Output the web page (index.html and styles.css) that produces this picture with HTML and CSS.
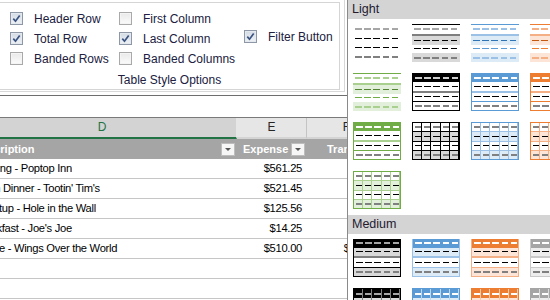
FILE: index.html
```html
<!DOCTYPE html>
<html lang="en">
<head>
  <meta charset="UTF-8" />
  <title>Table Styles</title>
  <link rel="stylesheet" href="styles.css">
</head>
<body>

  <div class="main">
    <div class="ribbon">
      <div class="group">
        <div class="opts">
          <div class="optcol">
            <div class="opt"><span class="cb on"><svg viewBox="0 0 11 11"><path d="M2.3 5.6 L4.5 8.2 L8.7 2.4"/></svg></span>Header Row</div>
            <div class="opt"><span class="cb on"><svg viewBox="0 0 11 11"><path d="M2.3 5.6 L4.5 8.2 L8.7 2.4"/></svg></span>Total Row</div>
            <div class="opt"><span class="cb"></span>Banded Rows</div>
          </div>
          <div class="optcol">
            <div class="opt"><span class="cb"></span>First Column</div>
            <div class="opt"><span class="cb on"><svg viewBox="0 0 11 11"><path d="M2.3 5.6 L4.5 8.2 L8.7 2.4"/></svg></span>Last Column</div>
            <div class="opt"><span class="cb"></span>Banded Columns</div>
          </div>
          <div class="optcol filter">
            <div class="opt"><span class="cb on"><svg viewBox="0 0 11 11"><path d="M2.3 5.6 L4.5 8.2 L8.7 2.4"/></svg></span>Filter Button</div>
          </div>
        </div>
        <div class="gname">Table Style Options</div>
      </div>
    </div>

    <div class="formula"></div>

    <div class="sheet">
      <div class="sgrid">
        <div class="ch sel">D</div>
        <div class="ch">E</div>
        <div class="ch">F</div>

        <div class="th">Description<span class="dd"></span></div>
        <div class="th">Expense<span class="dd"></span></div>
        <div class="th f">Transport</div>

        <div class="td">Lodging - Poptop Inn</div>
        <div class="td num">$561.25</div>
        <div class="td"></div>

        <div class="td">Team Dinner - Tootin' Tim's</div>
        <div class="td num">$521.45</div>
        <div class="td"></div>

        <div class="td">IT Setup - Hole in the Wall</div>
        <div class="td num">$125.56</div>
        <div class="td"></div>

        <div class="td">Breakfast - Joe's Joe</div>
        <div class="td num">$14.25</div>
        <div class="td"></div>

        <div class="td">Airfare - Wings Over the World</div>
        <div class="td num">$510.00</div>
        <div class="td num">$320.00</div>

        <div class="td"></div><div class="td"></div><div class="td"></div>
        <div class="td"></div><div class="td"></div><div class="td"></div>
        <div class="td"></div><div class="td"></div><div class="td"></div>
      </div>
    </div>
  </div>

  <div class="gallery">
    <div class="ghead">Light</div>
    <div class="tiles">
      <div class="thumb s-plain k"><i></i><i></i><i></i><i></i></div>
      <div class="thumb s-band k"><i></i><i></i><i></i><i></i></div>
      <div class="thumb s-band b"><i></i><i></i><i></i><i></i></div>
      <div class="thumb s-band o"><i></i><i></i><i></i><i></i></div>

      <div class="thumb s-band g"><i></i><i></i><i></i><i></i></div>
      <div class="thumb s-head k"><i></i><i></i><i></i><i></i></div>
      <div class="thumb s-head b"><i></i><i></i><i></i><i></i></div>
      <div class="thumb s-head o"><i></i><i></i><i></i><i></i></div>

      <div class="thumb s-head g"><i></i><i></i><i></i><i></i></div>
      <div class="thumb s-grid k"><i></i><i></i><i></i><i></i></div>
      <div class="thumb s-grid b"><i></i><i></i><i></i><i></i></div>
      <div class="thumb s-grid o"><i></i><i></i><i></i><i></i></div>

      <div class="thumb s-grid g"><i></i><i></i><i></i><i></i></div>
    </div>

    <div class="ghead">Medium</div>
    <div class="tiles">
      <div class="thumb s-med k"><i></i><i></i><i></i><i></i></div>
      <div class="thumb s-med b"><i></i><i></i><i></i><i></i></div>
      <div class="thumb s-med o"><i></i><i></i><i></i><i></i></div>
      <div class="thumb s-med y"><i></i><i></i><i></i><i></i></div>

      <div class="thumb s-mg k"><i></i><i></i><i></i><i></i></div>
      <div class="thumb s-mg b"><i></i><i></i><i></i><i></i></div>
      <div class="thumb s-mg o"><i></i><i></i><i></i><i></i></div>
      <div class="thumb s-mg y"><i></i><i></i><i></i><i></i></div>
    </div>
  </div>

</body>
</html>
```

FILE: styles.css
```css
body {
  margin: 0;
  width: 550px;
  height: 300px;
  overflow: hidden;
  display: flex;
  background: #fff;
  font-family: "Liberation Sans", Arial, sans-serif;
  color: #202040;
}

/* left side: ribbon + sheet */

.main {
  width: 347px;
  flex: none;
  display: flex;
  flex-direction: column;
  overflow: hidden;
}

.ribbon {
  width: 344px;
  height: 91px;
  border-right: 1px solid #d8d8d8;
  border-bottom: 1px solid #d8d8d8;
}

.group {
  box-sizing: border-box;
  width: 340px;
  height: 88px;
  margin-top: 2px;
  padding: 9px 0 0 10px;
  border: 1px solid #d5d5d5;
  border-left: none;
}

.opts {
  display: grid;
  grid-template-columns: 109px 125px auto;
}

.optcol {
  display: flex;
  flex-direction: column;
  gap: 7px;
}

.optcol.filter {
  padding-top: 18px;
}

.opt {
  display: flex;
  align-items: center;
  gap: 11px;
  height: 13px;
  font-size: 12px;
  white-space: nowrap;
}

.cb {
  box-sizing: border-box;
  width: 13px;
  height: 13px;
  flex: none;
  border: 1px solid #a9a9a9;
  background: linear-gradient(#e9e9e9, #fbfbfb);
  box-shadow: inset 0 0 0 1px #f4f4f4;
}

.cb.on {
  border-color: #8e97a6;
  background: linear-gradient(#d4dbe4, #eef2f6);
  box-shadow: inset 0 0 0 1px #e4e9ef;
}

.cb svg {
  display: block;
  width: 11px;
  height: 11px;
}

.cb path {
  fill: none;
  stroke: #3a5382;
  stroke-width: 1.7;
}

.gname {
  margin-top: 9px;
  margin-left: -10px;
  text-align: center;
  font-size: 12px;
  line-height: 13px;
}

.formula {
  height: 21px;
  margin-top: 3px;
  border-top: 1px solid #6e6e6e;
  border-bottom: 1px solid #7a7a7a;
}

.sheet {
  flex: 1;
  overflow: hidden;
}

.sgrid {
  display: grid;
  grid-template-columns: 269px 70px 80px;
  margin-left: -32px;
}

.ch {
  box-sizing: border-box;
  height: 21px;
  background: #e6e6e6;
  border-bottom: 2px solid #d4d4d4;
  border-right: 1px solid #c4c4c4;
  text-align: center;
  font-size: 12px;
  line-height: 19px;
  color: #262626;
}

.ch.sel {
  background: #d3d3d3;
  border-right-color: #e6e6e6;
  border-bottom-color: #217346;
  color: #217346;
}

.th {
  height: 20px;
  display: flex;
  align-items: center;
  padding-left: 6px;
  background: #a5a5a5;
  color: #fff;
  font-size: 11px;
  font-weight: bold;
  white-space: nowrap;
  overflow: hidden;
}

.th.f {
  padding-left: 20px;
}

.dd {
  position: relative;
  box-sizing: border-box;
  width: 14px;
  height: 13px;
  margin-left: auto;
  margin-right: 2px;
  border: 1px solid #bdbdbd;
  background: #f6f6f6;
}

.dd::after {
  content: "";
  position: absolute;
  left: 3px;
  top: 4px;
  border-top: 3px solid #555;
  border-left: 3px solid transparent;
  border-right: 3px solid transparent;
}

.td {
  box-sizing: border-box;
  height: 20px;
  padding: 0 6px;
  border-bottom: 1px solid #c6c6c6;
  font-size: 11.2px;
  letter-spacing: -0.3px;
  line-height: 19px;
  color: #000;
  white-space: nowrap;
  overflow: hidden;
}

.td.num {
  text-align: right;
  padding-right: 5px;
}

/* right side: style gallery */

.gallery {
  flex: 1;
  border-left: 1px solid #8a8a8a;
  overflow: hidden;
}

.ghead {
  height: 19px;
  padding-left: 4px;
  background: #d4d4d4;
  font-size: 12.5px;
  line-height: 19px;
  color: #231a30;
}

.tiles {
  display: grid;
  grid-template-columns: repeat(4, 48px);
  gap: 11px;
  padding: 5px 0 6px 5px;
}

.thumb {
  --hd: #a6a6a6;
  --d1: #000;
  --d2: #000;
  --d3: #808080;
  position: relative;
  box-sizing: border-box;
  height: 38px;
  display: flex;
  flex-direction: column;
}

.thumb i {
  flex: 1;
  min-height: 0;
  background-image: repeating-linear-gradient(90deg, transparent 0 1px, var(--dc) 1px 7.6px, transparent 7.6px 9.2px);
  background-size: 46px var(--dh);
  background-position: 1px 50%;
  background-repeat: no-repeat;
}

.thumb i:nth-child(1) { --dc: var(--hd); --dh: 2px; }
.thumb i:nth-child(2) { --dc: var(--d1); --dh: 1px; }
.thumb i:nth-child(3) { --dc: var(--d2); --dh: 1px; }
.thumb i:nth-child(4) { --dc: var(--d3); --dh: 2px; }

/* colour themes */
.k { --c: #000; --fl: #d9d9d9; --ln: #7f7f7f; --v: #000; --mb: #000; --mv: #7f7f7f;
     --bh: #a6a6a6; --b1: #000; --b2: #000; --b3: #808080; }
.b { --c: #5b9bd5; --fl: #ddebf7; --ln: #9bc2e6; --v: #9bc2e6; --mb: #9bc2e6; --mv: #bdd7ee;
     --bh: #9bc2e6; --b1: #2f75b5; --b2: #5b9bd5; --b3: #9bc2e6; }
.o { --c: #ed7d31; --fl: #fce4d6; --ln: #f4b084; --v: #f4b084; --mb: #f4b084; --mv: #f8cbad;
     --bh: #f4b084; --b1: #c65911; --b2: #ed7d31; --b3: #f4b084; }
.g { --c: #70ad47; --fl: #e2efda; --ln: #a9d08e; --v: #a9d08e; --mb: #a9d08e; --mv: #c6e0b4;
     --bh: #a9d08e; --b1: #548235; --b2: #70ad47; --b3: #a9d08e; }
.y { --c: #a5a5a5; --fl: #ededed; --ln: #c9c9c9; --v: #c9c9c9; --mb: #c9c9c9; --mv: #dbdbdb;
     --bh: #c9c9c9; --b1: #000; --b2: #000; --b3: #808080; }

/* light: banded rows with top rule */
.s-band {
  --hd: var(--bh);
  --d1: var(--b1);
  --d2: var(--b2);
  --d3: var(--b3);
  border-top: 1px solid var(--c);
}
.s-band i:nth-child(1) { border-bottom: 2px solid var(--ln); }
.s-band i:nth-child(2),
.s-band i:nth-child(4) { background-color: var(--fl); }

/* light: filled header with outline */
.s-head {
  --hd: #d0d0d0;
  border: 1px solid var(--c);
}
.s-head.b, .s-head.o, .s-head.g { --hd: #fff; }
.s-head i:nth-child(1) { background-color: var(--c); }
.s-head i:nth-child(2) { border-bottom: 2px solid var(--ln); }
.s-head i:nth-child(3) { border-bottom: 1px solid var(--c); }

/* light: full grid */
.s-grid {
  --hd: #808080;
  border: 1px solid var(--c);
}
.s-grid i:nth-child(-n+3) { border-bottom: 1px solid var(--v); }
.s-grid i:nth-child(2),
.s-grid i:nth-child(4) { background-color: var(--fl); }

/* medium: filled header, banded body */
.s-med {
  border: 1px solid var(--mb);
  border-top: none;
}
.s-med.b, .s-med.o, .s-med.y { --hd: #fff; }
.s-med i:nth-child(1) { background-color: var(--c); }
.s-med i:nth-child(2) { background-color: var(--fl); border-bottom: 2px solid var(--ln); }
.s-med i:nth-child(3) { border-bottom: 1px solid var(--mb); }
.s-med i:nth-child(4) { background-color: var(--fl); }

/* medium: filled header with column rules */
.s-mg {
  border: 1px solid var(--c);
}
.s-mg.b, .s-mg.o, .s-mg.y { --hd: #fff; }
.s-mg i:nth-child(1) { background-color: var(--c); }
.s-mg i:nth-child(2),
.s-mg i:nth-child(4) { background-color: var(--fl); }

.s-grid::after,
.s-mg::after {
  content: "";
  position: absolute;
  inset: 0;
  background: repeating-linear-gradient(90deg, transparent 0 8.2px, var(--v) 8.2px 9.2px);
}

.s-mg::after {
  background: repeating-linear-gradient(90deg, transparent 0 8.2px, var(--mv) 8.2px 9.2px);
}
```
